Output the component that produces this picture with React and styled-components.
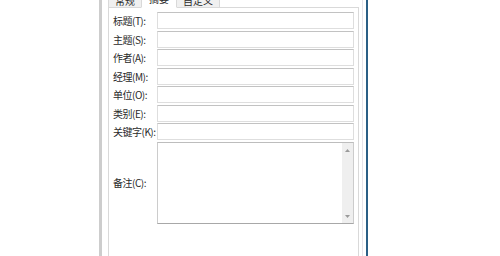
import React from "react";
import styled, { createGlobalStyle } from "styled-components";

const Global = createGlobalStyle`
  html, body { margin: 0; padding: 0; background: #ffffff; overflow: hidden; }
  body { width: 500px; height: 256px; }
`;

const Window = styled.div`
  margin-left: 99px;
  margin-top: -16px;
  width: 269px;
  height: 300px;
  box-sizing: border-box;
  background: #ffffff;
  border-left: 3px solid #cdcdcd;
  border-right: 2px solid #2b5f86;
  padding: 0 7px 0 6px;
  box-shadow: inset -3px 0 0 #ffffff, inset -4px 0 0 #e6e4ea;
  display: flex;
  flex-direction: column;
  font-family: "Microsoft YaHei", "Noto Sans CJK SC", sans-serif;
  font-size: 10px;
  letter-spacing: -0.5px;
  color: #2a2a2a;
`;

const TabStrip = styled.div`
  display: flex;
  align-items: flex-end;
  height: 23px;
  position: relative;
  z-index: 1;
`;

const Tab = styled.div`
  box-sizing: border-box;
  height: ${(p) => (p.$active ? "23px" : "21px")};
  padding: 0 ${(p) => (p.$active ? "7px" : "6px")};
  margin: 0 ${(p) => (p.$active ? "-1px" : "0")};
  display: flex;
  align-items: flex-end;
  line-height: 13px;
  letter-spacing: 0;
  padding-bottom: ${(p) => (p.$active ? "2px" : "0")};
  background: ${(p) => (p.$active ? "#ffffff" : "#f0f0f0")};
  border: 1px solid #d9d9d9;
  border-bottom: ${(p) => (p.$active ? "1px solid #ffffff" : "none")};
  margin-bottom: ${(p) => (p.$active ? "-1px" : "0")};
  position: relative;
  z-index: ${(p) => (p.$active ? 2 : 1)};
`;

const Panel = styled.div`
  flex: 1;
  border: 1px solid #d9d9d9;
  background: #ffffff;
  padding: 4px 4px 0 4px;
  display: grid;
  grid-template-columns: 44px 197px;
  grid-auto-rows: 17px;
  row-gap: 1.5px;
  align-content: start;
`;

const Label = styled.div`
  display: flex;
  align-items: center;
  white-space: nowrap;
  line-height: 13px;
  overflow: visible;
`;

const Field = styled.div`
  box-sizing: border-box;
  border: 1px solid #dedede;
  border-top-color: #c2c2c2;
  background: #ffffff;
`;

const Memo = styled.div`
  box-sizing: border-box;
  height: 82px;
  border: 1px solid #cccccc;
  border-top-color: #bdbdbd;
  border-bottom-color: #a8a8a8;
  background: #ffffff;
  display: flex;
  justify-content: flex-end;
`;

const MemoRow = styled.div`
  grid-column: 1 / -1;
  display: grid;
  grid-template-columns: 44px 197px;
  height: 82px;
`;

const ScrollBar = styled.div`
  width: 11px;
  background: #efefef;
  display: flex;
  flex-direction: column;
  justify-content: space-between;
  align-items: center;
  padding: 6px 0 5px;
`;

const Arrow = ({ up }) => (
  <svg width="5" height="3" viewBox="0 0 5 3">
    <polygon
      points={up ? "0,3 2.5,0 5,3" : "0,0 2.5,3 5,0"}
      fill="#9a9a9a"
    />
  </svg>
);

const fields = [
  "标题(T):",
  "主题(S):",
  "作者(A):",
  "经理(M):",
  "单位(O):",
  "类别(E):",
  "关键字(K):",
];

export default function App() {
  return (
    <>
      <Global />
      <Window>
        <TabStrip>
          <Tab>常规</Tab>
          <Tab $active>摘要</Tab>
          <Tab>自定义</Tab>
        </TabStrip>
        <Panel>
          {fields.map((f) => (
            <React.Fragment key={f}>
              <Label>{f}</Label>
              <Field />
            </React.Fragment>
          ))}
          <MemoRow>
            <Label>备注(C):</Label>
            <Memo>
              <ScrollBar>
                <Arrow up />
                <Arrow />
              </ScrollBar>
            </Memo>
          </MemoRow>
        </Panel>
      </Window>
    </>
  );
}
